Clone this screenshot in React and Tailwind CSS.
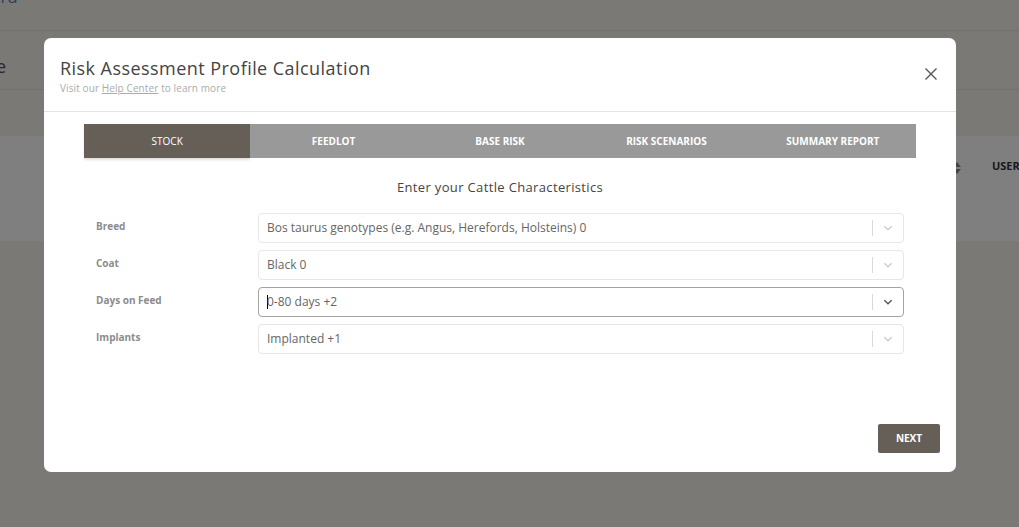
import React from 'react'

const tabs = ['STOCK', 'FEEDLOT', 'BASE RISK', 'RISK SCENARIOS', 'SUMMARY REPORT']

const fields = [
  { label: 'Breed', value: 'Bos taurus genotypes (e.g. Angus, Herefords, Holsteins) 0' },
  { label: 'Coat', value: 'Black 0' },
  { label: 'Days on Feed', value: '0-80 days +2', focused: true },
  { label: 'Implants', value: 'Implanted +1' },
]

const Chevron = ({ dark }) => (
  <svg width="12" height="12" viewBox="0 0 20 20" className={dark ? 'text-[#555]' : 'text-[#ccc]'}>
    <path d="M4.5 7.5 L10 13 L15.5 7.5" fill="none" stroke="currentColor" strokeWidth="2.2" strokeLinecap="round" />
  </svg>
)

const SelectBox = ({ value, focused }) => (
  <div className={`flex-1 h-[30px] flex items-center rounded-[4px] border bg-white ${focused ? 'border-[#a3a3a3]' : 'border-[#e6e6e6]'}`}>
    <div className="flex-1 flex items-center pl-[8px] text-[12px] text-[#666] whitespace-nowrap overflow-hidden">
      {focused && <span className="w-px h-[14px] bg-black -mr-px" />}
      <span>{value}</span>
    </div>
    <div className="w-px h-[16px] bg-[#d9d9d9]" />
    <div className="w-[30px] flex items-center justify-center">
      <Chevron dark={focused} />
    </div>
  </div>
)

const App = () => {
  return (
    <div className="relative w-[1019px] h-[527px] overflow-hidden bg-[#f6f2ec]" style={{ fontFamily: '"Open Sans", "Noto Sans", sans-serif' }}>
      {/* page behind the modal */}
      <div className="h-[31px] border-b border-[#e4e0da] flex items-start">
        <span className="-ml-[70px] -mt-[16px] text-[17px] text-[#4d87c7] whitespace-nowrap">Dashboard</span>
      </div>
      <div className="h-[59px] border-b border-[#e4e0da] flex items-center pt-[13px]">
        <div className="w-[6px] flex justify-end">
          <span className="text-[18px] text-[#555] whitespace-nowrap">Stock Profile</span>
        </div>
      </div>
      <div className="mt-[46px] h-[105px] bg-white flex pt-[22px]">
        <div className="flex-none w-[952px]" />
        <svg width="10" height="12" viewBox="0 0 10 12" className="flex-none mt-[4px] text-[#8a8a8a]">
          <path d="M5 0 L9 5 H1 Z M5 12 L1 7 H9 Z" fill="currentColor" />
        </svg>
        <span className="flex-none ml-[30px] text-[11px] font-bold text-[#333] whitespace-nowrap">USERNAME</span>
      </div>

      {/* overlay */}
      <div className="absolute inset-0 bg-black/50 pt-[38px] pl-[44px]">
        <div className="w-[912px] h-[434px] bg-white rounded-[7px] flex flex-col">
          <div className="relative px-4 pt-[17px] pb-[16px] border-b border-[#e3e3e3]">
            <div className="text-[18px] leading-[26px] tracking-[0.45px] text-[#444]">Risk Assessment Profile Calculation</div>
            <div className="text-[10px] leading-[14px] tracking-[0.1px] text-[#ababab]">
              Visit our <span className="underline">Help Center</span> to learn more
            </div>
            <button className="absolute right-[18px] top-[29px] text-[#555]">
              <svg width="14" height="14" viewBox="0 0 14 14">
                <path d="M1.5 1.5 L12.5 12.5 M12.5 1.5 L1.5 12.5" stroke="currentColor" strokeWidth="1.4" />
              </svg>
            </button>
          </div>

          <div className="flex-1 px-10 pt-[12px] flex flex-col">
            <div className="flex h-[34px]">
              {tabs.map((t, i) => (
                <div
                  key={t}
                  className={`flex-1 flex items-center justify-center text-[10px] text-white ${i === 0 ? 'bg-[#655f58] shadow-[0_2px_2px_rgba(0,0,0,0.12)]' : 'bg-[#999999] font-bold'}`}
                >
                  {t}
                </div>
              ))}
            </div>

            <div className="mt-[19px] text-center text-[13px] leading-[20px] tracking-[0.35px] text-[#444]">Enter your Cattle Characteristics</div>

            <div className="mt-[16px] flex flex-col gap-[7px]">
              {fields.map((f) => (
                <div key={f.label} className="flex items-start px-3">
                  <div className="w-[162px] pt-[7px] text-[10px] leading-[12px] font-bold text-[#8c8c8c]">{f.label}</div>
                  <SelectBox value={f.value} focused={f.focused} />
                </div>
              ))}
            </div>
          </div>

          <div className="flex justify-end pr-4 pb-[19px]">
            <button className="w-[62px] h-[29px] rounded-[2px] bg-[#655f58] text-white text-[10px] font-bold">NEXT</button>
          </div>
        </div>
      </div>
    </div>
  )
}

export default App
